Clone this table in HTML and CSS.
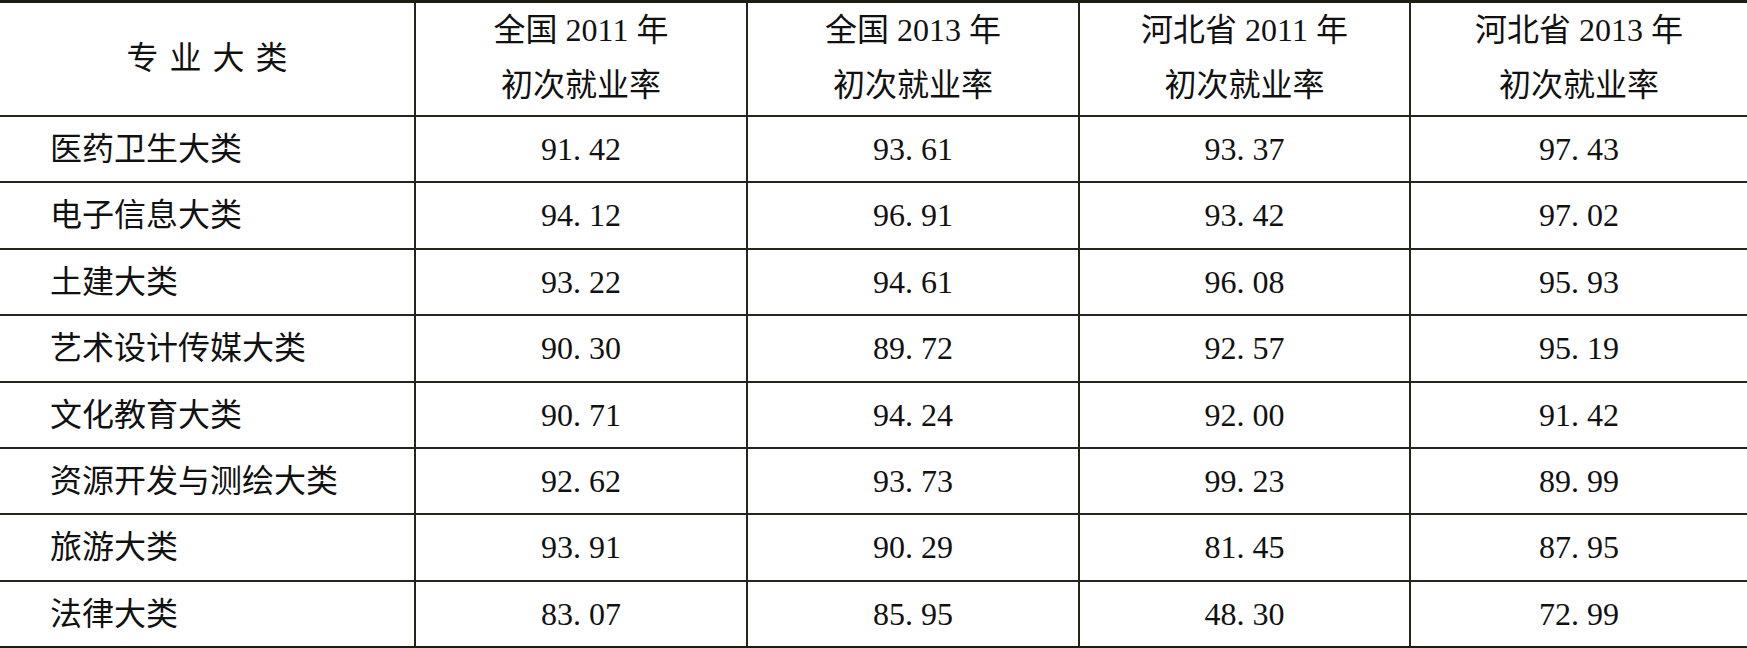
FILE: index.html
```html
<!DOCTYPE html>
<html lang="zh-CN">
<head>
    <meta charset="UTF-8">
    <title>专业大类初次就业率</title>
    <link rel="stylesheet" href="styles.css">
</head>
<body>
    <table class="rate-table">
        <colgroup>
            <col class="col-name">
            <col class="col-num">
            <col class="col-num">
            <col class="col-num-narrow">
            <col>
        </colgroup>
        <thead>
            <tr>
                <th class="name-head">专 业 大 类</th>
                <th>全国 2011 年<br>初次就业率</th>
                <th>全国 2013 年<br>初次就业率</th>
                <th>河北省 2011 年<br>初次就业率</th>
                <th>河北省 2013 年<br>初次就业率</th>
            </tr>
        </thead>
        <tbody>
            <tr><td>医药卫生大类</td><td>91. 42</td><td>93. 61</td><td>93. 37</td><td>97. 43</td></tr>
            <tr><td>电子信息大类</td><td>94. 12</td><td>96. 91</td><td>93. 42</td><td>97. 02</td></tr>
            <tr><td>土建大类</td><td>93. 22</td><td>94. 61</td><td>96. 08</td><td>95. 93</td></tr>
            <tr><td>艺术设计传媒大类</td><td>90. 30</td><td>89. 72</td><td>92. 57</td><td>95. 19</td></tr>
            <tr><td>文化教育大类</td><td>90. 71</td><td>94. 24</td><td>92. 00</td><td>91. 42</td></tr>
            <tr><td>资源开发与测绘大类</td><td>92. 62</td><td>93. 73</td><td>99. 23</td><td>89. 99</td></tr>
            <tr><td>旅游大类</td><td>93. 91</td><td>90. 29</td><td>81. 45</td><td>87. 95</td></tr>
            <tr><td>法律大类</td><td>83. 07</td><td>85. 95</td><td>48. 30</td><td>72. 99</td></tr>
        </tbody>
    </table>
</body>
</html>
```

FILE: styles.css
```css
body {
    margin: 0;
    background: #fff;
    font-family: "Liberation Serif", "Noto Sans CJK SC", serif;
    color: #111;
}
.rate-table {
    width: 1747px;
    table-layout: fixed;
    border-collapse: separate;
    border-spacing: 0;
    font-size: 32px;
}
.col-name {
    width: 414px;
}
.col-num {
    width: 332px;
}
.col-num-narrow {
    width: 331px;
}
th, td {
    padding: 0;
    text-align: center;
    border-bottom: 2px solid #26241c;
    border-left: 2px solid #26241c;
}
th:first-child, td:first-child {
    border-left: none;
}
th {
    font-weight: normal;
    border-top: 3px solid #1f1c12;
    line-height: 55px;
    padding: 0 0 2px;
}
.name-head {
    word-spacing: 3px;
}
td {
    line-height: 64.4px;
}
td:first-child {
    text-align: left;
    padding-left: 50px;
}
tbody tr:last-child td {
    border-bottom: 3px solid #1f1c12;
}
```
